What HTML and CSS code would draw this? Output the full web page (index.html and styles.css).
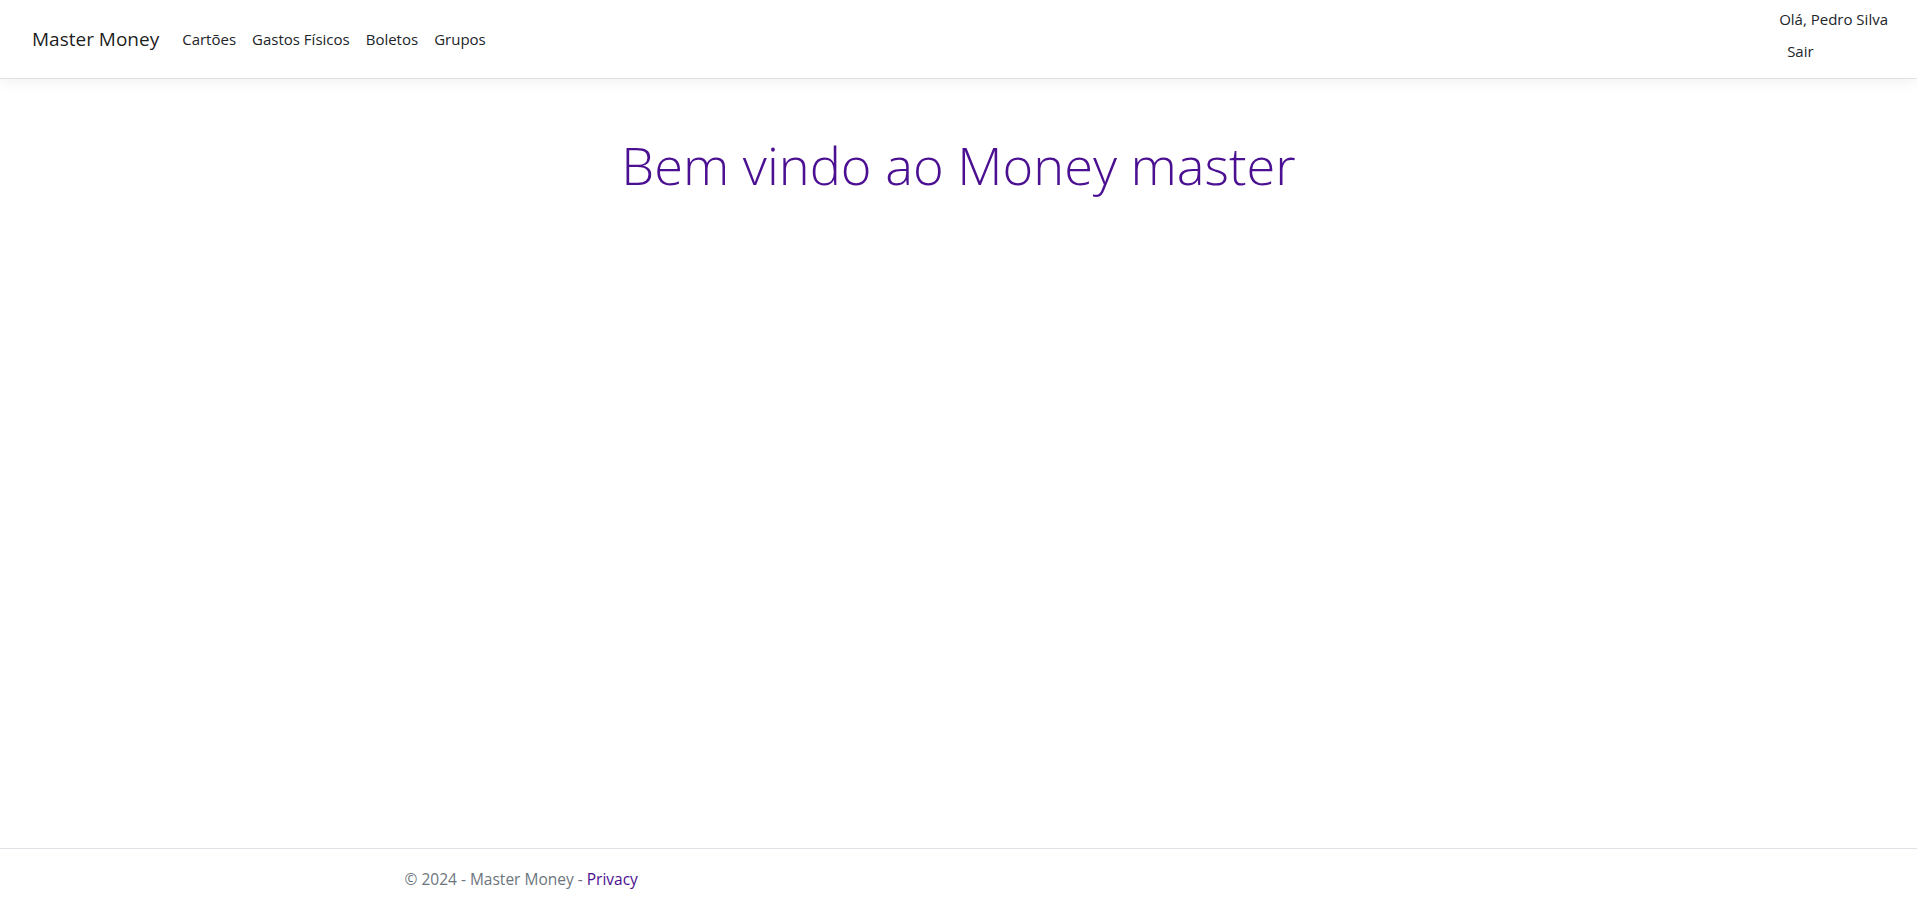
FILE: index.html
```html
<!DOCTYPE html>
<html lang="pt-br">
<head>
<meta charset="utf-8">
<title>Master Money</title>
<link rel="stylesheet" href="styles.css">
</head>
<body>
<header>
  <nav class="navbar">
    <div class="nav-left">
      <a class="brand" href="#">Master Money</a>
      <ul class="nav-links">
        <li><a class="nav-link" href="#">Cartões</a></li>
        <li><a class="nav-link" href="#">Gastos Físicos</a></li>
        <li><a class="nav-link" href="#">Boletos</a></li>
        <li><a class="nav-link" href="#">Grupos</a></li>
      </ul>
    </div>
    <ul class="nav-user">
      <li><span class="user-hello">Olá, Pedro Silva</span></li>
      <li><button class="logout" type="button">Sair</button></li>
    </ul>
  </nav>
</header>
<main class="content">
  <h1 class="display">Bem vindo ao Money master</h1>
</main>
<footer class="footer">
  <div class="footer-inner">&copy; 2024 - Master Money - <a href="#" class="privacy">Privacy</a></div>
</footer>
</body>
</html>
```
FILE: styles.css
```css
* { box-sizing: border-box; }
html, body { margin: 0; padding: 0; height: 100%; }
body {
  font-family: "Open Sans", "Noto Sans", sans-serif;
  font-size: 16px;
  color: #212529;
  background: #fff;
  position: relative;
  overflow: hidden;
}
ul { list-style: none; margin: 0; padding: 0; }
a { text-decoration: none; }

.navbar {
  height: 79px;
  border-bottom: 1px solid #dee2e6;
  box-shadow: 0 4px 12px rgba(0,0,0,0.05);
  display: flex;
  justify-content: space-between;
  align-items: center;
  padding: 0 29px 0 32px;
  background: #fff;
}
.nav-left { display: flex; align-items: center; }
.brand {
  font-size: 19px;
  color: rgba(0,0,0,0.9);
  margin-right: 15px;
}
.nav-links { display: flex; }
.nav-link {
  display: block;
  padding: 8px 8px;
  font-size: 15px;
  color: #212529;
}
.nav-user {
  display: flex;
  flex-direction: column;
  align-items: flex-start;
  align-self: stretch;
  padding-top: 7px;
}
.user-hello {
  display: block;
  font-size: 15px;
  line-height: 24px;
  color: #212529;
}
.logout {
  border: 0;
  background: none;
  font: inherit;
  font-size: 15px;
  line-height: 24px;
  color: #212529;
  padding: 0 0 0 8px;
  margin-top: 8px;
  cursor: pointer;
}

.content {
  text-align: center;
  padding-top: 55px;
}
.display {
  margin: 0;
  font-size: 52.4px;
  font-weight: 300;
  line-height: 1.2;
  color: #4b0f91;
}

.footer {
  position: absolute;
  left: 0; right: 0; bottom: 0;
  height: 60px;
  border-top: 1px solid #dee2e6;
  line-height: 60px;
  color: #6c757d;
  font-size: 15.5px;
}
.footer-inner {
  width: 1140px;
  margin: 0 auto;
  padding: 0 16px;
}
.privacy { color: #4b0f91; }
```
